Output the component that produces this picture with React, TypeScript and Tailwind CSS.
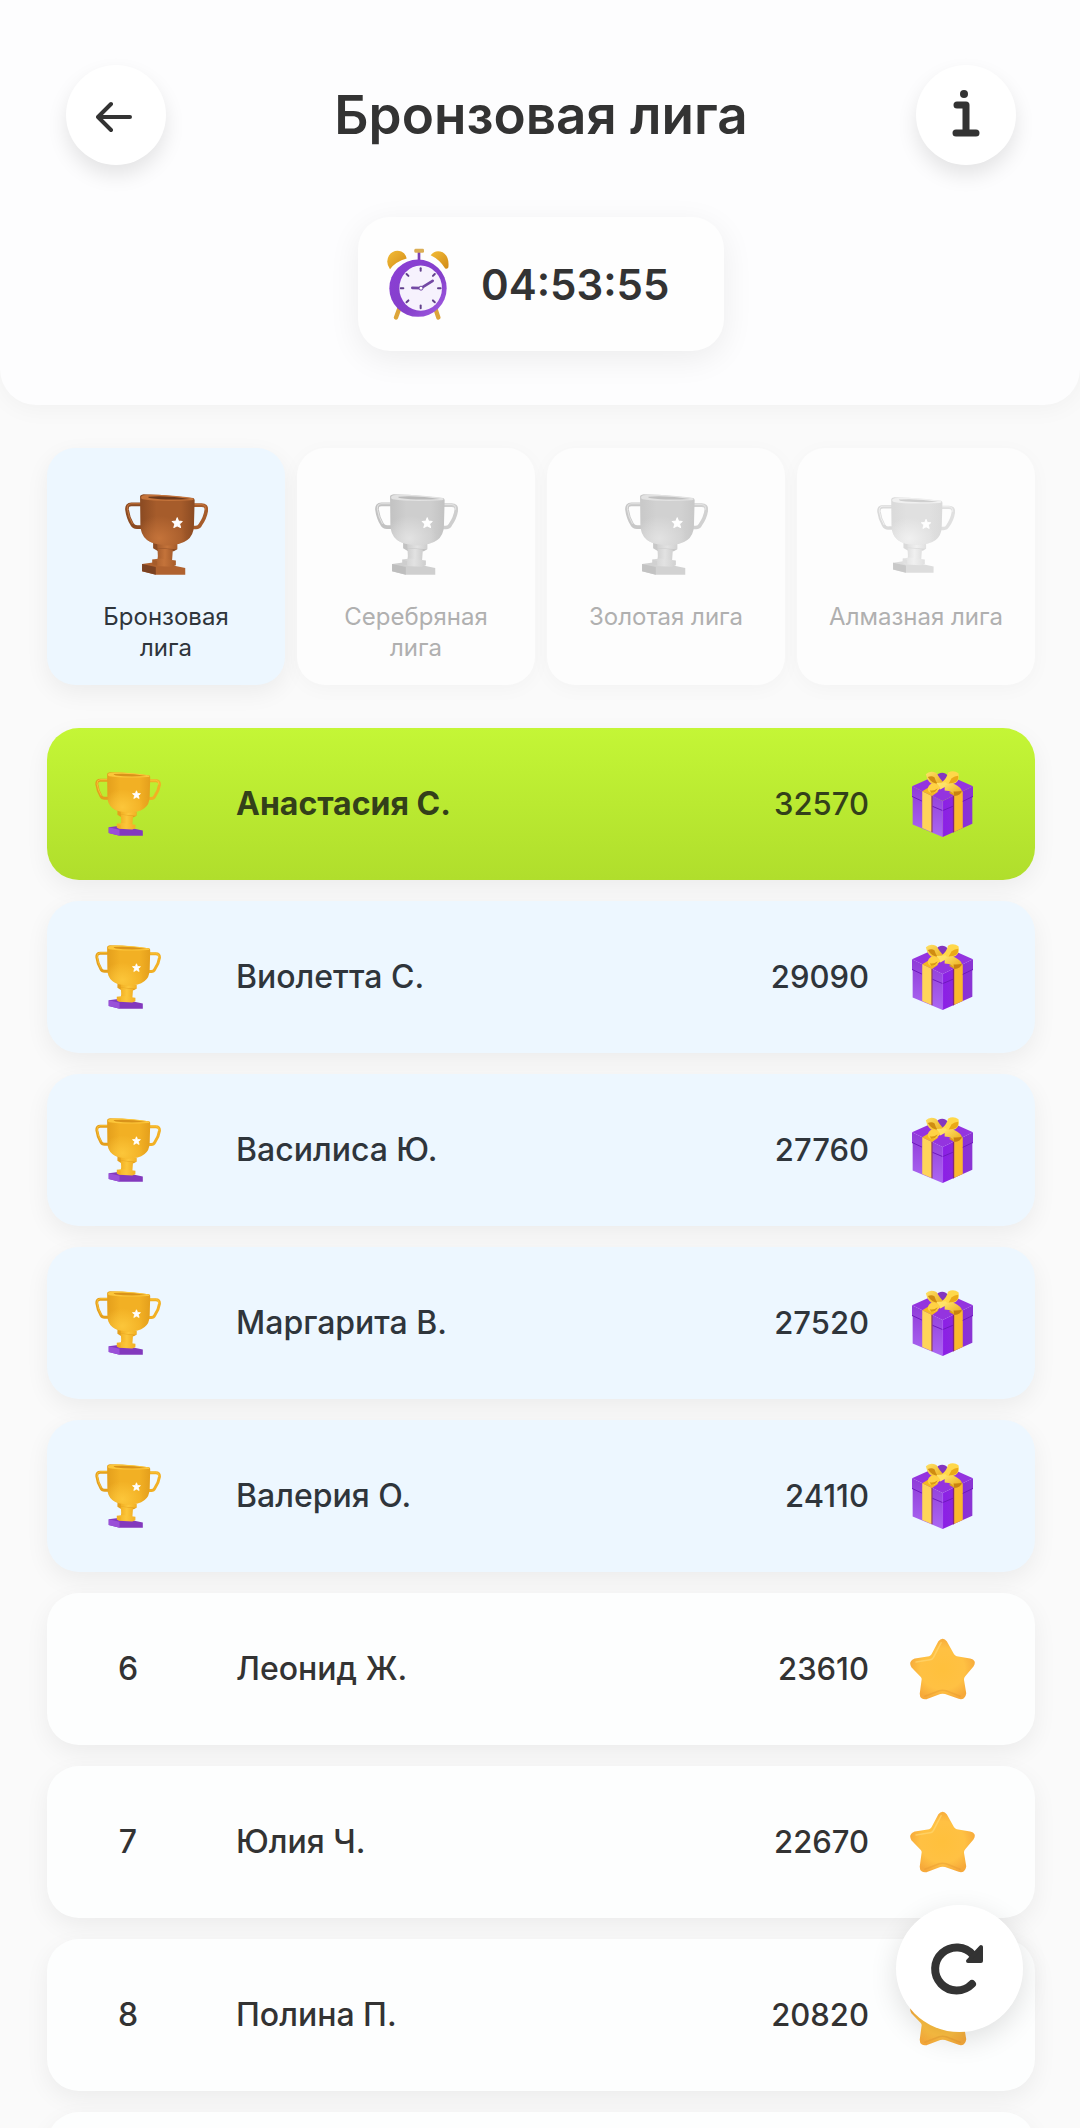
import { useId } from "react";

type Metal = "bronze" | "silver" | "gray" | "diamond" | "gold";

const metals: Record<Metal, { light: string; mid: string; dark: string; rim: string; base: string; baseDark: string }> = {
  bronze: { light: "#c4733a", mid: "#a65c2b", dark: "#8a4a22", rim: "#6e3a1c", base: "#b0622f", baseDark: "#7b4222" },
  silver: { light: "#e2e2e2", mid: "#cecece", dark: "#c2c2c2", rim: "#bababa", base: "#cfcfcf", baseDark: "#bebebe" },
  gray: { light: "#e2e2e2", mid: "#d1d1d1", dark: "#c8c8c8", rim: "#c0c0c0", base: "#d2d2d2", baseDark: "#c3c3c3" },
  diamond: { light: "#f0f0f0", mid: "#e0e0e0", dark: "#dadada", rim: "#cfcfcf", base: "#dddddd", baseDark: "#c9c9c9" },
  gold: { light: "#fcc63a", mid: "#f2b024", dark: "#e49f1c", rim: "#d9931a", base: "#8339bd", baseDark: "#9a50d8" },
};

function Trophy({ metal, className }: { metal: Metal; className: string }) {
  const id = useId();
  const c = metals[metal];
  return (
    <svg viewBox="0 0 248 242" className={className} aria-hidden="true">
      <defs>
        <linearGradient id={id + "cup"} x1="0" y1="0" x2="1" y2="0">
          <stop offset="0" stopColor={c.dark} />
          <stop offset=".3" stopColor={c.mid} />
          <stop offset=".75" stopColor={c.mid} />
          <stop offset="1" stopColor={c.dark} />
        </linearGradient>
        <radialGradient id={id + "glow"} cx=".35" cy=".85" r=".5">
          <stop offset="0" stopColor={c.light} />
          <stop offset="1" stopColor={c.light} stopOpacity="0" />
        </radialGradient>
        <linearGradient id={id + "stem"} x1="0" y1="0" x2="1" y2="0">
          <stop offset="0" stopColor={c.mid} />
          <stop offset=".5" stopColor={c.light} />
          <stop offset="1" stopColor={c.mid} />
        </linearGradient>
      </defs>
      <g fill="none" strokeLinejoin="round" strokeLinecap="round">
        <path d="M46 31H19Q5 31 6 46Q9 70 21 90Q26 100 38 99H50" stroke={c.dark} strokeWidth="11" />
        <path d="M46 29H19Q6 30 7 45Q11 70 22 88" stroke={c.light} strokeWidth="3" />
        <path d="M206 33H229Q244 33 243 48Q240 71 225 92Q221 101 210 100H202" stroke={c.mid} strokeWidth="11" />
        <path d="M206 31H229Q242 32 241 46" stroke={c.light} strokeWidth="3" />
      </g>
      <path d="M84 144L156 150V165L146 171H99L84 162Z" fill={c.dark} />
      <path d="M96 144L156 150V165L97 161Z" fill={`url(#${id}stem)`} />
      <path d="M97 162L143 166L140 208H96Q100 188 97 162Z" fill={`url(#${id}stem)`} />
      <path d="M51 209L94 203L180 221V241H92L51 231Z" fill={c.base} />
      <path d="M51 209L92 218V241L51 231Z" fill={c.baseDark} />
      <path d="M82 196L104 193L152 199V213L140 217L90 215L82 210Z" fill={`url(#${id}stem)`} />
      <path d="M82 196L96 201V214L82 209Z" fill={c.mid} />
      <path d="M45 9Q44 3 55 1L102 2L204 12Q209 14 208 22L206 94Q205 153 125 153Q46 152 46 91Z" fill={`url(#${id}cup)`} />
      <path d="M46 18L208 22L206 94Q205 153 125 153Q46 152 46 91Z" fill={`url(#${id}glow)`} />
      <path d="M48 9Q50 2 75 2Q150 2 204 13Q208 18 199 19Q100 24 53 16Q47 14 48 9Z" fill={c.light} />
      <path d="M70 8Q130 4 194 15Q120 19 78 13Q68 11 70 8Z" fill={c.rim} />
      <path d="M156 71L160 81L171 82L163 89L166 100L156 95L146 100L149 89L141 82L152 81Z" fill="#fff" stroke="#fff" strokeWidth="3" strokeLinejoin="round" />
    </svg>
  );
}

function Gift() {
  const id = useId();
  return (
    <svg viewBox="0 0 185 200" className="h-[66px] w-[61px]" aria-hidden="true">
      <defs>
        <linearGradient id={id + "l"} x1="0" y1="0" x2="0" y2="1">
          <stop offset="0" stopColor="#8f3bd8" />
          <stop offset="1" stopColor="#ab67f2" />
        </linearGradient>
        <linearGradient id={id + "r"} x1="0" y1="0" x2="1" y2="0">
          <stop offset="0" stopColor="#8c1fe6" />
          <stop offset="1" stopColor="#8a36d2" />
        </linearGradient>
        <linearGradient id={id + "y"} x1="0" y1="0" x2="1" y2="1">
          <stop offset="0" stopColor="#ffe36a" />
          <stop offset="1" stopColor="#e9a916" />
        </linearGradient>
      </defs>
      <path d="M0 46L93 91V200L2 162V80L0 78Z" fill={`url(#${id}l)`} />
      <path d="M93 91L185 46V78L183 80V160L93 200Z" fill={`url(#${id}r)`} />
      <path d="M0 46L70 15H115L185 46L93 91Z" fill="#9434df" />
      <path d="M31 61L61 76V186L31 173Z" fill="#ffd45a" />
      <path d="M59 75L62 76V186L59 185Z" fill="#7a2458" />
      <path d="M127 75L154 62V173L127 185Z" fill="#f9b92c" />
      <path d="M124 76L128 74V185L124 187Z" fill="#84277a" />
      <path d="M31 61L50 50L80 62L61 76Z" fill="#f5b823" />
      <path d="M127 75L154 62L140 54L112 66Z" fill="#e0a01c" />
      <path d="M0 77L30 91M62 107L93 120L124 107M154 92L185 77" fill="none" stroke="#6d18bc" strokeWidth="3" />
      <path d="M93 91V200" stroke="#a552f2" strokeWidth="2" />
      <path d="M69 19Q92 -8 113 19L93 36Z" fill="#8436bf" />
      <path d="M42 10Q54 -3 74 6Q84 23 94 33L78 49Q47 40 42 10Z" fill={`url(#${id}y)`} />
      <path d="M48 18Q60 13 68 19Q71 30 78 39Q58 36 48 18Z" fill="#cf8c12" />
      <path d="M90 35Q107 20 109 5Q126 -4 141 7Q145 29 132 36L104 47Z" fill="#ffd84a" />
      <path d="M120 22Q130 14 140 14Q142 28 131 34Q120 37 109 42Z" fill="#eba917" />
      <path d="M74 36L102 34L109 43L86 56Z" fill="#ffe267" />
      <path d="M48 52Q52 37 68 37Q83 42 86 52Q73 68 58 66Q47 63 48 52Z" fill="#ffd245" />
      <path d="M54 58Q65 62 78 52Q72 67 58 66Z" fill="#db9b15" />
      <path d="M99 43Q115 33 131 41Q148 49 151 60Q146 75 128 76Q128 61 99 59Z" fill={`url(#${id}y)`} />
      <path d="M126 62Q141 63 151 60Q148 74 128 76Z" fill="#c98210" />
    </svg>
  );
}

function Star() {
  const id = useId();
  return (
    <svg viewBox="-5 -5 205 196" className="h-[62px] w-[65px]" aria-hidden="true">
      <defs>
        <radialGradient id={id} cx=".5" cy=".5" r=".55">
          <stop offset="0" stopColor="#ffc03c" />
          <stop offset=".65" stopColor="#ffc143" />
          <stop offset="1" stopColor="#f6a93a" />
        </radialGradient>
      </defs>
      <path
        d="M88 8Q98 -5 108 9L131 50Q135 56 142 57L184 64Q201 68 192 82L166 113Q160 120 161 128L168 170Q166 187 150 183L107 168Q98 165 89 168L47 184Q30 187 30 171L36 127Q37 120 32 115L3 85Q-6 70 11 64L56 57Q62 56 66 50Z"
        fill={`url(#${id})`}
        stroke={`url(#${id})`}
        strokeWidth="9"
        strokeLinejoin="round"
      />
      <path d="M93 10L69 56Q65 63 58 64L14 71" fill="none" stroke="#ffda78" strokeWidth="5" strokeLinecap="round" opacity=".6" />
      <path d="M42 179L87 162Q98 158 109 162L153 179" fill="none" stroke="#e79a30" strokeWidth="5" strokeLinecap="round" opacity=".45" />
    </svg>
  );
}

function AlarmClock() {
  const ticks = [0, 45, 90, 135, 180, 225, 270, 315];
  return (
    <svg viewBox="0 0 186 215" className="h-[72px] w-[62px]" aria-hidden="true">
      <defs>
        <linearGradient id="clockBody" x1="0" y1="0" x2="1" y2="1">
          <stop offset="0" stopColor="#8b3fd6" />
          <stop offset=".6" stopColor="#8540ca" />
          <stop offset="1" stopColor="#a560e6" />
        </linearGradient>
        <linearGradient id="clockBell" x1="0" y1="0" x2="1" y2="1">
          <stop offset="0" stopColor="#f3bd38" />
          <stop offset="1" stopColor="#d18a17" />
        </linearGradient>
      </defs>
      <path d="M38 178L27 208M144 178L154 208" stroke="#dda53a" strokeWidth="13" strokeLinecap="round" />
      <path d="M9 63Q-6 42 6 22Q20 3 43 10Q56 16 59 31Q26 40 9 63Z" fill="url(#clockBell)" />
      <path d="M131 21Q145 3 167 12Q188 25 184 58Q179 64 174 60Q158 34 131 21Z" fill="url(#clockBell)" />
      <path d="M96 10V40" stroke="#7d3fb6" strokeWidth="8" />
      <rect x="82" y="2" width="29" height="12" rx="4" fill="#dbae55" />
      <circle cx="93" cy="120" r="86" fill="url(#clockBody)" />
      <ellipse cx="101" cy="120" rx="64" ry="68" fill="#f6f2fd" />
      {ticks.map((deg) => (
        <path key={deg} d="M101 60V68" stroke="#62408c" strokeWidth="6" strokeLinecap="round" transform={`rotate(${deg} 101 120)`} />
      ))}
      <path d="M76 119L102 120L137 98" fill="none" stroke="#7349a4" strokeWidth="8" strokeLinecap="round" />
      <circle cx="102" cy="120" r="6" fill="#fff" stroke="#7349a4" strokeWidth="3" />
    </svg>
  );
}

const leagues: { name: string; metal: Metal; active?: boolean }[] = [
  { name: "Бронзовая лига", metal: "bronze", active: true },
  { name: "Серебряная лига", metal: "silver" },
  { name: "Золотая лига", metal: "gray" },
  { name: "Алмазная лига", metal: "diamond" },
];

const players = [
  { place: 1, name: "Анастасия С.", score: 32570 },
  { place: 2, name: "Виолетта С.", score: 29090 },
  { place: 3, name: "Василиса Ю.", score: 27760 },
  { place: 4, name: "Маргарита В.", score: 27520 },
  { place: 5, name: "Валерия О.", score: 24110 },
  { place: 6, name: "Леонид Ж.", score: 23610 },
  { place: 7, name: "Юлия Ч.", score: 22670 },
  { place: 8, name: "Полина П.", score: 20820 },
];

function rowStyle(place: number) {
  if (place === 1) return "bg-linear-to-b from-[#c4f636] to-[#b0de2c] text-[#33401a]";
  if (place <= 5) return "bg-[#edf7ff] text-[#2f353b]";
  return "bg-[#fdfefe] text-[#333333]";
}

export default function App() {
  return (
    <div className="h-screen overflow-hidden bg-[#fafafa] font-['Inter',sans-serif] text-[#333333]">
      <header className="rounded-b-[36px] bg-[#fdfdfe] pt-[65px] pr-[64px] pb-[54px] pl-[66px] shadow-[0_4px_24px_rgba(0,0,0,0.04)]">
        <div className="flex items-center justify-between">
          <button type="button" aria-label="Назад" className="flex size-[100px] items-center justify-center rounded-full bg-white shadow-[0_10px_20px_rgba(0,0,0,0.1)]">
            <svg viewBox="0 0 40 36" className="h-9 w-10" fill="none" stroke="currentColor" strokeWidth="4" strokeLinecap="round" strokeLinejoin="round">
              <path d="M34 20H2M15 7L2 20L15 33" />
            </svg>
          </button>
          <h1 className="text-[53px] leading-[60px] font-semibold">Бронзовая лига</h1>
          <button type="button" aria-label="Информация" className="flex size-[100px] items-center justify-center rounded-full bg-white shadow-[0_10px_20px_rgba(0,0,0,0.1)]">
            <svg viewBox="0 0 28 50" className="h-[50px] w-7" fill="none" stroke="currentColor" strokeWidth="7" strokeLinecap="round" strokeLinejoin="round">
              <path d="M5 15H14V43M4 43H24" />
              <circle cx="12" cy="4" r="4" fill="currentColor" stroke="none" />
            </svg>
          </button>
        </div>
        <div className="mx-auto mt-[52px] flex h-[134px] w-[366px] items-center gap-8 rounded-[32px] bg-[#fefefe] pl-[29px] shadow-[0_8px_32px_rgba(0,0,0,0.07)]">
          <AlarmClock />
          <time className="text-[42px] font-semibold">04:53:55</time>
        </div>
      </header>

      <main className="pt-[43px] pr-[45px] pl-[47px]">
        <nav className="grid grid-cols-4 gap-3">
          {leagues.map((league) => (
            <button
              key={league.name}
              type="button"
              disabled={!league.active}
              className={
                "flex h-[237px] flex-col items-center rounded-[28px] pt-[46px] text-[24px] leading-[31px] " +
                (league.active ? "bg-[#edf7ff] text-[#2f353b] shadow-[0_8px_24px_rgba(0,0,0,0.06)]" : "bg-[#fdfdfd] text-[#b0b0b0] shadow-[0_4px_20px_rgba(0,0,0,0.03)]")
              }
            >
              <span className="mb-[26px] flex h-[81px] items-center">
                <Trophy metal={league.metal} className={league.metal === "diamond" ? "h-[76px] w-[78px]" : "h-[81px] w-[83px]"} />
              </span>
              <span className="px-[30px]">{league.name}</span>
            </button>
          ))}
        </nav>

        <ol className="mt-[43px] flex flex-col gap-[21px]">
          {players.map((p) => (
            <li
              key={p.place}
              className={"flex h-[152px] items-center rounded-[32px] pr-[59px] pl-[45px] text-[32px] font-medium shadow-[0_8px_24px_rgba(0,0,0,0.06)] " + rowStyle(p.place)}
            >
              <span className="flex w-[72px] justify-center">
                {p.place <= 5 ? <Trophy metal="gold" className="h-[64px] w-[66px]" /> : p.place}
              </span>
              <span className={p.place === 1 ? "ml-[72px] flex-1 font-bold" : "ml-[72px] flex-1"}>{p.name}</span>
              <span className="text-[31px]">{p.score}</span>
              <span className="ml-[39px] flex w-[68px] justify-center">{p.place <= 5 ? <Gift /> : <Star />}</span>
            </li>
          ))}
          <li className="h-[152px] rounded-[32px] bg-[#fdfefe] shadow-[0_8px_24px_rgba(0,0,0,0.06)]" />
        </ol>
      </main>

      <button
        type="button"
        aria-label="Обновить"
        className="fixed right-[57px] bottom-24 flex size-[127px] items-center justify-center rounded-full bg-white shadow-[0_8px_28px_rgba(0,0,0,0.12)]"
      >
        <svg viewBox="0 0 52 52" className="size-[52px] overflow-visible" fill="none" stroke="currentColor" strokeLinecap="round" strokeLinejoin="round">
          <path d="M38 41A21.5 21.5 0 1 1 39 12" strokeWidth="8" />
          <path d="M47 4V18H34Z" fill="currentColor" strokeWidth="4" />
        </svg>
      </button>
    </div>
  );
}
